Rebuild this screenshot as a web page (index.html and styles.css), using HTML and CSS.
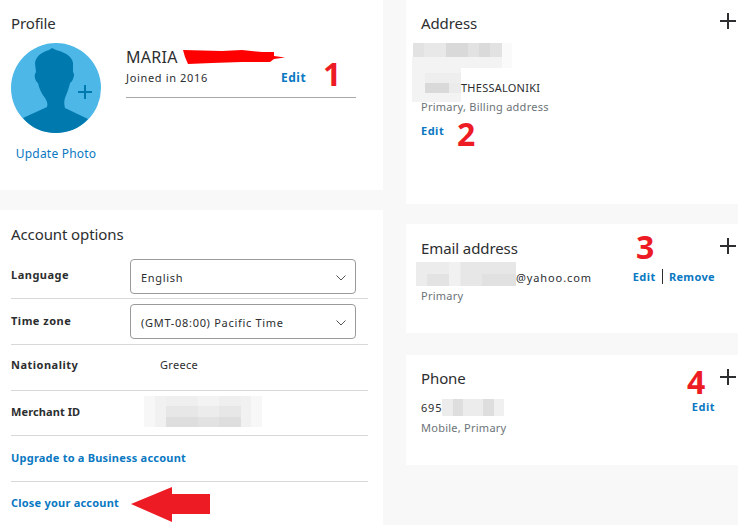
FILE: index.html
```html
<!doctype html>
<html lang="en">
  <head>
    <meta charset="UTF-8" />
    <title>Profile settings</title>
    <link rel="stylesheet" href="styles.css">
  </head>
  <body>
    <div class="page">
      <div class="column-left">
        <section class="card profile">
          <h2>Profile</h2>
          <div class="profile-body">
            <div class="photo">
              <svg class="avatar" width="90" height="90" viewBox="0 0 90 90">
                <circle cx="45" cy="45" r="45" fill="#4db7e8"/>
                <path fill="#0079ae" d="M12 75 L36 64 C37 61 36 58 34 55 C30 50 28 45 27 40 C25 39 23 34 24 31 L25 29 L24 20 C25 12 32 9 38 7 L41 5 L45 7 C52 9 61 12 62 20 L62 29 L63 31 C63 35 61 39 59 40 C58 45 56 50 54 55 C53 58 53 61 54 65 L77 76 C69 85 57 90 45 90 C32 90 20 85 12 75 Z"/>
                <path stroke="#0079ae" stroke-width="2" fill="none" d="M74 42 V56 M67 49 H81"/>
              </svg>
              <a class="update-link" href="#">Update Photo</a>
            </div>
            <div class="identity">
              <div class="name">MARIA</div>
              <div class="joined-row">
                <span class="joined">Joined in 2016</span>
                <a class="link profile-edit" href="#">Edit</a>
              </div>
            </div>
          </div>
        </section>

        <section class="card options">
          <h2>Account options</h2>
          <div class="option-row">
            <span class="option-label">Language</span>
            <div class="select"><span>English</span><svg width="10" height="6" viewBox="0 0 10 6"><path d="M0.5 0.5 L5 5 L9.5 0.5" fill="none" stroke="#555" stroke-width="1"/></svg></div>
          </div>
          <div class="option-row">
            <span class="option-label">Time zone</span>
            <div class="select"><span>(GMT-08:00) Pacific Time</span><svg width="10" height="6" viewBox="0 0 10 6"><path d="M0.5 0.5 L5 5 L9.5 0.5" fill="none" stroke="#555" stroke-width="1"/></svg></div>
          </div>
          <div class="option-row nationality-row">
            <span class="option-label">Nationality</span>
            <span class="option-value">Greece</span>
          </div>
          <div class="option-row merchant-row">
            <span class="option-label merchant-label">Merchant ID</span>
            <svg class="mosaic merchant" width="118" height="31" viewBox="0 0 118 31">
              <rect width="118" height="31" fill="#f7f7f7"/>
              <rect x="11" width="96" height="31" fill="#f1f1f1"/>
              <rect x="22" width="75" height="10" fill="#efefef"/>
              <rect x="22" y="10" width="75" height="11" fill="#e7e7e7"/>
              <rect x="22" y="21" width="75" height="10" fill="#dedede"/>
              <rect x="54" width="21" height="10" fill="#f3f3f3"/>
              <rect x="54" y="10" width="21" height="11" fill="#ececec"/>
              <rect x="54" y="21" width="21" height="10" fill="#e2e2e2"/>
            </svg>
          </div>
          <div class="option-row upgrade-row"><a class="link account-link" href="#">Upgrade to a Business account</a></div>
          <div class="option-row last"><a class="link account-link" href="#">Close your account</a></div>
        </section>
      </div>

      <div class="column-right">
        <section class="card address">
          <div class="card-head"><h2>Address</h2><span class="plus"></span></div>
          <svg class="mosaic address-blur" width="100" height="59" viewBox="0 0 100 59">
            <rect x="1" width="99" height="25" fill="#fafafa"/>
            <rect x="1" width="89" height="14" fill="#e2e2e2"/>
            <rect x="12" width="22" height="14" fill="#e8e8e8"/>
            <rect x="34" width="22" height="14" fill="#d9d9d9"/>
            <rect x="67" width="11" height="14" fill="#dadada"/>
            <rect y="14" width="90" height="11" fill="#f3f3f3"/>
            <rect y="19" width="49" height="40" fill="#f3f3f3"/>
            <rect x="13" y="30" width="36" height="10" fill="#eeeeee"/>
            <rect x="13" y="40" width="24" height="10" fill="#d9d9d9"/>
            <rect x="37" y="40" width="12" height="10" fill="#ebebeb"/>
          </svg>
          <div class="city">THESSALONIKI</div>
          <div class="muted">Primary, Billing address</div>
          <a class="link edit-below" href="#">Edit</a>
        </section>

        <section class="card email">
          <div class="card-head"><h2>Email address</h2><span class="plus"></span></div>
          <div class="detail-row">
            <div>
              <div class="value"><svg class="mosaic" width="100" height="24" viewBox="0 0 100 24"><rect width="100" height="24" fill="#ececec"/><rect x="33" width="11" height="24" fill="#f1f1f1"/><rect x="45" width="55" height="24" fill="#e7e7e7"/><rect x="11" y="12" width="22" height="12" fill="#e3e3e3"/><rect x="66" y="12" width="34" height="12" fill="#e1e1e1"/></svg><span class="email-text">@yahoo.com</span></div>
              <div class="muted">Primary</div>
            </div>
            <div class="actions"><a class="link" href="#">Edit</a><a class="link remove" href="#">Remove</a></div>
          </div>
        </section>

        <section class="card phone">
          <div class="card-head"><h2>Phone</h2><span class="plus"></span></div>
          <div class="detail-row">
            <div>
              <div class="value phone-value"><span>695</span><svg class="mosaic" width="62" height="17" viewBox="0 0 62 17"><rect width="62" height="17" fill="#ececec"/><rect x="11" width="10" height="17" fill="#dedede"/><rect x="41" width="11" height="17" fill="#dedede"/><rect x="52" width="10" height="17" fill="#f0f0f0"/></svg></div>
              <div class="muted">Mobile, Primary</div>
            </div>
            <a class="link phone-edit" href="#">Edit</a>
          </div>
        </section>
      </div>

      <!-- red marks drawn over the screenshot -->
      <svg class="scribble" width="104" height="16" viewBox="0 0 104 16"><path d="M1 1 L40 2 L60 1 L80 3 L92 3 L92 7 L103 8.5 L92 10 L88 13 L60 13 L30 14 L6 15 L3 8 Z" fill="#ff0000"/></svg>
      <span class="mark mark-1">1</span>
      <span class="mark mark-2">2</span>
      <span class="mark mark-3">3</span>
      <span class="mark mark-4">4</span>
      <svg class="arrow" width="80" height="36" viewBox="0 0 80 36"><path d="M0 17 L41 0 L41 7 L79 7 L79 27 L41 27 L41 35 Z" fill="#ed1c24"/></svg>
    </div>
  </body>
</html>
```

FILE: styles.css
```css
:root {
  --page-bg: #f8f8f8;
  --link: #0a78c2;
  --text: #2c2e2f;
  --muted: #6c7378;
  --border: #d8d8d8;
}

* {
  margin: 0;
  padding: 0;
  box-sizing: border-box;
}

html,
body {
  height: 525px;
  overflow: hidden;
}

body {
  font-family: 'Noto Sans', 'Open Sans', sans-serif;
  font-size: 11px;
  letter-spacing: 0.5px;
  color: var(--text);
  background-color: var(--page-bg);
}

a {
  text-decoration: none;
}

.page {
  position: relative;
  display: flex;
  width: 738px;
  height: 525px;
}

.column-left {
  display: flex;
  flex-direction: column;
  gap: 20px;
  width: 383px;
}

.column-right {
  display: flex;
  flex-direction: column;
  width: 332px;
  margin-left: 23px;
}

.card {
  background-color: white;
  padding-left: 11px;
}

h2 {
  font-size: 15px;
  font-weight: 400;
  letter-spacing: -0.1px;
  line-height: 22px;
}

.link {
  color: var(--link);
  font-weight: 700;
}

/* profile */
.profile {
  height: 190px;
  padding-top: 12px;
}

.profile-body {
  display: flex;
  margin-top: 9px;
}

.photo {
  display: flex;
  flex-direction: column;
  align-items: center;
  width: 90px;
}

.update-link {
  color: var(--link);
  font-size: 12px;
  letter-spacing: 0.2px;
  margin-top: 12px;
  white-space: nowrap;
}

.identity {
  width: 230px;
  height: 55px;
  margin-left: 25px;
  border-bottom: 1px solid #a8a8a8;
}

.name {
  font-size: 16px;
  letter-spacing: 0.3px;
  line-height: 20px;
  margin-top: 4px;
}

.joined-row {
  display: flex;
  line-height: 16px;
  margin-top: 3px;
}

.joined {
  width: 155px;
  letter-spacing: 0.65px;
}

.profile-edit {
  font-size: 12px;
}

/* account options */
.options {
  height: 315px;
  padding-top: 13px;
}

.option-row {
  display: flex;
  align-items: center;
  width: 357px;
  height: 46px;
  border-bottom: 1px solid var(--border);
}

.options h2 + .option-row {
  margin-top: 8px;
}

.options h2 + .option-row .select {
  margin-top: 2px;
}

.option-label {
  width: 119px;
  font-weight: 700;
  margin-bottom: 2px;
}

.nationality-row {
  padding-bottom: 4px;
}

.merchant-row {
  height: 45px;
  padding-bottom: 4px;
}

.merchant-row .option-label {
  margin-bottom: 0;
}

.upgrade-row {
  padding-bottom: 2px;
}

.option-row.last {
  border-bottom: none;
  padding-bottom: 5px;
}

.merchant-label {
  letter-spacing: 0.1px;
}

.account-link {
  letter-spacing: 0.22px;
}

.option-value {
  margin-left: 30px;
  letter-spacing: 0.3px;
  margin-bottom: 2px;
}

.select {
  display: flex;
  align-items: center;
  justify-content: space-between;
  width: 226px;
  height: 35px;
  padding: 2px 9px 0 10px;
  border: 1px solid #9a9a9a;
  border-radius: 4px;
  letter-spacing: 0.7px;
}

/* pixelated blur over private values */
.mosaic {
  display: block;
  flex-shrink: 0;
}

.merchant {
  margin-left: 14px;
}

/* right column */
.address {
  height: 204px;
  padding: 12px 0 0 15px;
}

.email {
  height: 109px;
  margin-top: 20px;
  padding: 13px 0 0 15px;
}

.phone {
  height: 110px;
  margin-top: 22px;
  padding: 12px 0 0 15px;
}

.card-head {
  display: flex;
  justify-content: space-between;
}

.plus {
  width: 16px;
  height: 16px;
  margin: 1px 2px 0 0;
  background:
    linear-gradient(var(--text), var(--text)) center / 16px 2px no-repeat,
    linear-gradient(var(--text), var(--text)) center / 2px 16px no-repeat;
}

.phone .plus {
  margin-top: 2px;
}

.address-blur {
  margin: 9px 0 0 -9px;
}

.city {
  margin: -22px 0 0 40px;
  line-height: 16px;
  height: 16px;
  letter-spacing: 0.25px;
}

.muted {
  color: var(--muted);
  line-height: 16px;
  letter-spacing: 0.25px;
}

.address .muted {
  margin-top: 3px;
}

.edit-below {
  display: block;
  margin-top: 8px;
  line-height: 16px;
}

.detail-row {
  display: flex;
  justify-content: space-between;
}

.value {
  display: flex;
  align-items: center;
  margin: 3px 0 0 -5px;
}

.email-text {
  padding-top: 6px;
  letter-spacing: 0.9px;
}

.phone-value {
  margin: 10px 0 0 0;
  letter-spacing: 0.8px;
}

.email .muted {
  margin-top: 2px;
}

.phone .muted {
  margin-top: 4px;
}

.actions {
  display: flex;
  align-items: center;
  height: 16px;
  margin: 9px 23px 0 0;
}

.actions .link:first-child {
  padding-right: 6px;
  border-right: 1px solid var(--text);
}

.remove {
  margin-left: 6px;
  letter-spacing: 0.35px;
}

.phone-edit {
  margin: 10px 23px 0 0;
}

/* annotations */
.scribble {
  position: absolute;
  left: 182px;
  top: 49px;
}

.mark {
  position: absolute;
  font-family: 'Open Sans', sans-serif;
  font-size: 32px;
  font-weight: 700;
  line-height: 24px;
  letter-spacing: 0;
  color: #ed1c24;
}

.mark-1 { left: 323px; top: 62px; }
.mark-2 { left: 457px; top: 122px; }
.mark-3 { left: 636px; top: 235px; }
.mark-4 { left: 687px; top: 370px; }

.arrow {
  position: absolute;
  left: 131px;
  top: 487px;
}
```
